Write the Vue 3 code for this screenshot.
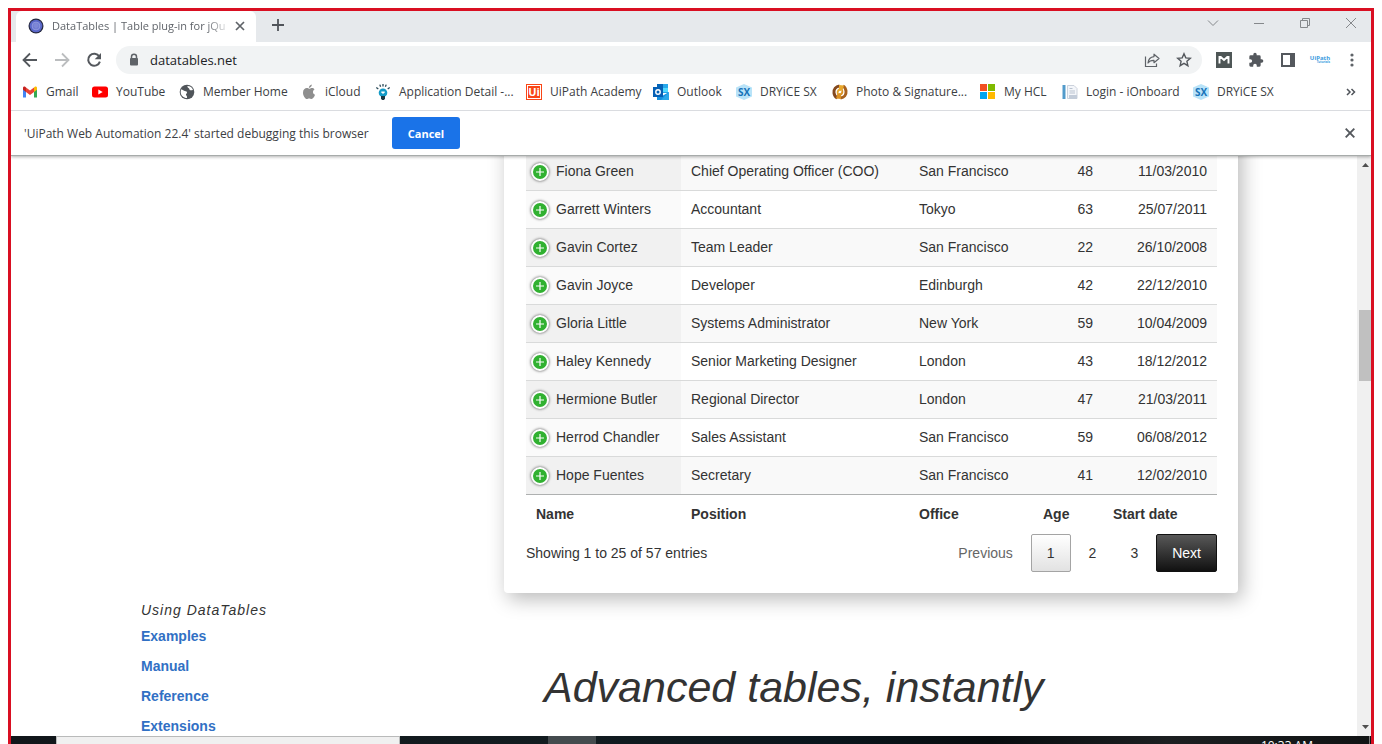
<script setup>
import { ref } from 'vue'

const address = ref('datatables.net')

const bookmarks = [
  { icon: 'gmail', label: 'Gmail' },
  { icon: 'youtube', label: 'YouTube' },
  { icon: 'globe', label: 'Member Home' },
  { icon: 'apple', label: 'iCloud' },
  { icon: 'bulb', label: 'Application Detail -...' },
  { icon: 'uipath', label: 'UiPath Academy' },
  { icon: 'outlook', label: 'Outlook' },
  { icon: 'sx', label: 'DRYiCE SX' },
  { icon: 'photo', label: 'Photo & Signature...' },
  { icon: 'windows', label: 'My HCL' },
  { icon: 'page', label: 'Login - iOnboard' },
  { icon: 'sx', label: 'DRYiCE SX' }
]

const rows = [
  ['Fiona Green', 'Chief Operating Officer (COO)', 'San Francisco', '48', '11/03/2010'],
  ['Garrett Winters', 'Accountant', 'Tokyo', '63', '25/07/2011'],
  ['Gavin Cortez', 'Team Leader', 'San Francisco', '22', '26/10/2008'],
  ['Gavin Joyce', 'Developer', 'Edinburgh', '42', '22/12/2010'],
  ['Gloria Little', 'Systems Administrator', 'New York', '59', '10/04/2009'],
  ['Haley Kennedy', 'Senior Marketing Designer', 'London', '43', '18/12/2012'],
  ['Hermione Butler', 'Regional Director', 'London', '47', '21/03/2011'],
  ['Herrod Chandler', 'Sales Assistant', 'San Francisco', '59', '06/08/2012'],
  ['Hope Fuentes', 'Secretary', 'San Francisco', '41', '12/02/2010']
]

const links = ['Examples', 'Manual', 'Reference', 'Extensions']
</script>

<template>
  <div class="screen">
    <header class="chrome">
      <div class="tabstrip">
        <div class="tab">
          <svg width="16" height="16" viewBox="0 0 16 16">
            <circle cx="8" cy="8" r="7.5" fill="#26293f" />
            <circle cx="8" cy="8" r="6.3" fill="#5966c8" />
            <circle cx="8" cy="8" r="3.9" fill="#6f7ad2" stroke="#8f98de" stroke-width="1" />
            <path d="M5.6 6 8 4.800l2.400 1.200v2.600L8 11 5.600 8.600z" fill="#7d87d6" />
          </svg>
          <span class="tab-title">DataTables | Table plug-in for jQu</span>
          <button class="bare" aria-label="Close tab">
            <svg width="10" height="10" viewBox="0 0 10 10"><path d="m1 1 8 8M9 1 1 9" stroke="#5f6368" stroke-width="1.7" fill="none" /></svg>
          </button>
        </div>
        <button class="bare new-tab" aria-label="New tab">
          <svg width="12" height="12" viewBox="0 0 12 12"><path d="M6 0v12M0 6h12" stroke="#50545a" stroke-width="1.8" /></svg>
        </button>
        <div class="window-controls">
          <button class="bare" aria-label="Search tabs">
            <svg width="12" height="12" viewBox="0 0 12 12"><path d="m1 3.5 5 5 5-5" stroke="#85888b" fill="none" /></svg>
          </button>
          <button class="bare" aria-label="Minimize">
            <svg width="12" height="12" viewBox="0 0 12 12"><path d="M1 6.500h10" stroke="#85888b" /></svg>
          </button>
          <button class="bare" aria-label="Restore">
            <svg width="12" height="12" viewBox="0 0 12 12"><path d="M1.500 3.500h7v7h-7zM3.500 3.500v-2h7v7h-2" stroke="#85888b" fill="none" /></svg>
          </button>
          <button class="bare" aria-label="Close window">
            <svg width="12" height="12" viewBox="0 0 12 12"><path d="m1 1 10 10M11 1 1 11" stroke="#85888b" fill="none" /></svg>
          </button>
        </div>
      </div>

      <div class="toolbar">
        <button class="bare tool" aria-label="Back">
          <svg width="16" height="16" viewBox="0 0 16 16"><path d="M15 8H2M8 1.500 1.500 8 8 14.500" stroke="#54585d" stroke-width="1.800" fill="none" /></svg>
        </button>
        <button class="bare tool" aria-label="Forward">
          <svg width="16" height="16" viewBox="0 0 16 16"><path d="M1 8h13M8 1.500 14.500 8 8 14.500" stroke="#bbbdbf" stroke-width="1.800" fill="none" /></svg>
        </button>
        <button class="bare tool" aria-label="Reload">
          <svg width="16" height="16" viewBox="0 0 16 16"><path d="M13.300 4.500A6 6 0 1 0 13.900 9.600" stroke="#54585d" stroke-width="2" fill="none" /><path d="M15 1v6.300H8.700z" fill="#54585d" /></svg>
        </button>
        <div class="omnibox">
          <svg width="12" height="14" viewBox="0 0 12 14"><path d="M3.500 6V3.700a2.500 2.500 0 0 1 5 0V6" stroke="#5f6368" stroke-width="1.500" fill="none" /><rect x="2" y="5" width="8" height="7.500" rx="1" fill="#5f6368" /></svg>
          <input v-model="address" class="address" type="text" aria-label="Address" />
          <button class="bare tool" aria-label="Share">
            <svg width="16" height="16" viewBox="0 0 16 16"><path d="M1.500 4.500v10h11v-3" stroke="#5f6368" stroke-width="1.200" fill="none" /><path d="M10 2.200 15 6.500 10 10.700V8.400C7 8.300 5.200 9.200 4 11c.3-3.600 2.300-6 6-6.400z" stroke="#5f6368" stroke-width="1.200" stroke-linejoin="round" fill="none" /></svg>
          </button>
          <button class="bare tool" aria-label="Bookmark">
            <svg width="16" height="16" viewBox="0 0 16 16"><path d="m8 1.800 1.800 4.100 4.500.4-3.400 3 1 4.400L8 11.400l-3.900 2.300 1-4.400-3.400-3 4.500-.4z" stroke="#54585d" stroke-width="1.400" fill="none" /></svg>
          </button>
        </div>
        <button class="bare tool" aria-label="Mail extension">
          <svg width="16" height="16" viewBox="0 0 16 16"><path d="M0 0h16v16H0z" fill="#4e5656" /><path d="M3.500 11.500V5h1.200L8 8l3.300-3h1.200v6.500" stroke="#fff" stroke-width="1.900" fill="none" /></svg>
        </button>
        <button class="bare tool" aria-label="Extensions">
          <svg width="16" height="16" viewBox="0 0 24 24"><path d="M20.500 11H19V7a2 2 0 0 0-2-2h-4V3.500a2.500 2.500 0 0 0-5 0V5H4a2 2 0 0 0-2 2v3.800h1.500a2.700 2.700 0 0 1 0 5.400H2V20a2 2 0 0 0 2 2h3.800v-1.500a2.700 2.700 0 0 1 5.400 0V22H17a2 2 0 0 0 2-2v-4h1.500a2.500 2.500 0 0 0 0-5z" fill="#54585d" /></svg>
        </button>
        <button class="bare tool" aria-label="Side panel">
          <svg width="16" height="16" viewBox="0 0 16 16"><path d="M1 1h14v14H1zM3 3v10h7V3z" fill="#54585d" fill-rule="evenodd" /></svg>
        </button>
        <button class="bare tool profile" aria-label="Profile"><span>UiPath</span><small>Tutorials</small></button>
        <button class="bare tool" aria-label="Menu">
          <svg width="16" height="16" viewBox="0 0 16 16" fill="#5f6368"><circle cx="8" cy="3" r="1.600" /><circle cx="8" cy="8" r="1.600" /><circle cx="8" cy="13" r="1.600" /></svg>
        </button>
      </div>

      <nav class="bookmarks" aria-label="Bookmarks">
        <a v-for="(b, i) in bookmarks" :key="i" href="#" class="bookmark">
          <svg v-if="b.icon === 'gmail'" width="16" height="16" viewBox="0 0 16 16"><path d="M1 4.500v9h3V7z" fill="#4285f4" /><path d="M15 4.500v9h-3V7z" fill="#34a853" /><path d="M12 3.600V8l3-2.300V4c0-1.400-1.300-1.900-2.200-1.200z" fill="#fbbc04" /><path d="M1 5.700 4 8V3.600l-.8-.8C2.300 2.100 1 2.600 1 4z" fill="#c5221f" /><path d="M4 3.500 8 6.500l4-3V8l-4 3-4-3z" fill="#ea4335" /></svg>
          <svg v-else-if="b.icon === 'youtube'" width="16" height="16" viewBox="0 0 16 16"><rect y="2.500" width="16" height="11" rx="2.500" fill="#f00" /><path d="M6.300 5.500v5l4.400-2.500z" fill="#fff" /></svg>
          <svg v-else-if="b.icon === 'globe'" width="16" height="16" viewBox="0 0 16 16"><circle cx="8" cy="8" r="7.300" fill="#50555a" /><path d="M2 5.500c1.500 0 2 .7 3 1.200s2.700.2 3 1.500-1.500 1.500-1 2.800c.4 1 1.300 1 1 2.900-3.500 0-6.300-2.500-6.300-6z" fill="#fff" /><path d="M8.500 2c-.3 1.300.3 1.600 1.300 2.300.8.600.4 1.700 1.500 2 1.200.3 2-.5 2.700-.3-.8-2.500-2.800-4-5.500-4z" fill="#fff" /></svg>
          <svg v-else-if="b.icon === 'apple'" width="16" height="16" viewBox="0 0 16 16" fill="#8e8e8e"><path d="M10.800.5c.1 1.700-1.200 3.300-2.900 3.400C7.700 2.300 9.200.7 10.800.5z" /><path d="M13.500 5.400c-2.200 1.400-1.900 4.300.5 5.300-.6 1.700-1.900 4.300-3.500 4.300-.9 0-1.200-.6-2.300-.6s-1.500.6-2.300.6C4.200 15 2 11.800 2 8.700c0-3 2-4.600 3.800-4.600 1.100 0 1.700.7 2.400.7s1.500-.8 2.800-.8c1 0 1.900.5 2.500 1.400z" /></svg>
          <svg v-else-if="b.icon === 'bulb'" width="16" height="16" viewBox="0 0 16 16"><circle cx="8" cy="8.700" r="4.300" fill="#149bc7" /><path d="M6 12h4v2.500L9 16H7l-1-1.500z" fill="#1c3642" /><path d="M5.800 8c1-.6 3.400-.6 4.400 0L8 10z" fill="#fff" /><path d="M8 0v2.500M4.800.6l.8 2.200M11.200.6l-.8 2.200M1.300 3.500l2 1.500M14.700 3.500l-2 1.500" stroke="#294857" stroke-width="1.300" /></svg>
          <span v-else-if="b.icon === 'uipath'" class="ui-logo">Ui</span>
          <svg v-else-if="b.icon === 'outlook'" width="16" height="16" viewBox="0 0 16 16"><path d="M4 0h11v9H4z" fill="#28a8ea" /><path d="M4 0h6v5H4z" fill="#0364b8" /><path d="M10 4h5v4h-5z" fill="#50d9ff" /><path d="m4 8 6 3.500L16 8v8H4z" fill="#1490df" /><path d="m16 8-8 8h8z" fill="#28a8ea" /><path d="M0 3h10v10H0z" fill="#0560b5" /><circle cx="5" cy="8" r="2.200" stroke="#fff" stroke-width="1.400" fill="none" /></svg>
          <span v-else-if="b.icon === 'sx'" class="sx-logo">SX</span>
          <svg v-else-if="b.icon === 'photo'" width="16" height="16" viewBox="0 0 16 16"><path d="M7.500 2C4 2.500 1.500 5 2 9c.3 2.400 1.300 4 3.500 5" stroke="#84491f" stroke-width="3" fill="none" /><path d="M8.500 14c3.500-.5 6-3 5.500-7-.3-2.400-1.300-4-3-5" stroke="#a8611f" stroke-width="3" fill="none" /><path d="M12 1.500 7 1v3.500C4.500 6 4 8.500 5.500 11 6.500 7.500 8 7 10.500 6.500z" fill="#e8a72c" /><path d="M4 14.500l5 .5v-3.500c2.500-1.500 3-4 1.500-6.500C9.500 8.500 8 9 5.500 9.500z" fill="#dc9222" /><path d="M8 6.500 9.500 8 8 9.500 6.500 8z" fill="#fff" /></svg>
          <svg v-else-if="b.icon === 'windows'" width="16" height="16" viewBox="0 0 16 16"><path d="M0 0h7v7H0z" fill="#f25022" /><path d="M8 0h7v7H8z" fill="#7fba00" /><path d="M0 8h7v7H0z" fill="#00a4ef" /><path d="M8 8h7v7H8z" fill="#ffb900" /></svg>
          <svg v-else width="16" height="16" viewBox="0 0 16 16"><path d="M.5 1h3v14h-3z" fill="#529bcb" /><path d="M5.500 1.500H12l3 3v10H5.500z" fill="#f4f6fa" stroke="#ccd2dc" /><path d="M7.500 4.500h3M7.500 7h5.500M7.500 9h5.500" stroke="#b9c2cf" /><path d="M7 11h8v4H7z" fill="#c3ccd9" /></svg>
          <span class="bookmark-label">{{ b.label }}</span>
        </a>
        <button class="bare" aria-label="More bookmarks">
          <svg width="10" height="8" viewBox="0 0 10 8"><path d="m1 1 3 3-3 3M5.500 1l3 3-3 3" stroke="#50545a" stroke-width="1.500" fill="none" /></svg>
        </button>
      </nav>

      <div class="infobar">
        <span class="notice">'UiPath Web Automation 22.4' started debugging this browser</span>
        <button class="cancel">Cancel</button>
        <button class="bare dismiss" aria-label="Dismiss">
          <svg width="10" height="10" viewBox="0 0 10 10"><path d="m.7.7 8.600 8.600M9.300.7.7 9.300" stroke="#54585d" stroke-width="1.900" /></svg>
        </button>
      </div>
    </header>

    <div class="viewport">
      <main class="page">
        <section class="card">
          <table>
            <colgroup>
              <col class="c-name" /><col class="c-position" /><col class="c-office" /><col class="c-age" /><col />
            </colgroup>
            <tbody>
              <tr v-for="r in rows" :key="r[0]">
                <td class="name">
                  <div class="name-cell"><button class="expand" :aria-label="'Details of ' + r[0]"><svg width="8" height="8" viewBox="0 0 8 8"><path d="M4 0v8M0 4h8" stroke="#fff" stroke-width="1.200" /></svg></button>{{ r[0] }}</div>
                </td>
                <td>{{ r[1] }}</td>
                <td>{{ r[2] }}</td>
                <td class="num">{{ r[3] }}</td>
                <td class="num">{{ r[4] }}</td>
              </tr>
            </tbody>
            <tfoot>
              <tr>
                <th>Name</th>
                <th>Position</th>
                <th>Office</th>
                <th>Age</th>
                <th>Start date</th>
              </tr>
            </tfoot>
          </table>
          <div class="table-foot">
            <span>Showing 1 to 25 of 57 entries</span>
            <div class="pager">
              <button class="pg disabled" disabled>Previous</button>
              <button class="pg current">1</button>
              <button class="pg">2</button>
              <button class="pg">3</button>
              <button class="pg next">Next</button>
            </div>
          </div>
        </section>

        <div class="lower">
          <aside>
            <h2>Using DataTables</h2>
            <ul>
              <li v-for="l in links" :key="l"><a href="#">{{ l }}</a></li>
            </ul>
          </aside>
          <h1>Advanced tables, instantly</h1>
        </div>
      </main>
      <div class="scrollbar">
        <svg width="7" height="4" viewBox="0 0 7 4"><path d="M0 4h7L3.500 0z" fill="#505050" /></svg>
        <div class="thumb"></div>
        <svg width="7" height="4" viewBox="0 0 7 4"><path d="M0 0h7L3.500 4z" fill="#505050" /></svg>
      </div>
    </div>

    <footer class="taskbar">
      <div class="task-search"></div>
      <div class="task-active"></div>
      <span class="clock">10:33 AM</span>
      <div class="peek"></div>
    </footer>
  </div>
</template>

<style>
body {
  margin: 0;
  background: #fff;
}
</style>

<style scoped>
* {
  box-sizing: border-box;
}
.screen {
  height: calc(100vh - 8px);
  margin: 8px 8px 0;
  border: 3px solid #d90f22;
  border-bottom: 0;
  display: flex;
  flex-direction: column;
  overflow: hidden;
  background: #fff;
  font-family: "Open Sans", "Noto Sans", sans-serif;
  font-size: 12px;
  color: #3c4043;
}
svg {
  display: block;
  flex: none;
}
.bare {
  border: 0;
  padding: 0;
  background: none;
  font: inherit;
  color: inherit;
  display: flex;
  align-items: center;
  justify-content: center;
  flex: none;
}
.chrome {
  position: relative;
  z-index: 2;
  flex: none;
  background: #fff;
  border-bottom: 1px solid #a7abaa;
  box-shadow: 0 1px 3px rgba(0, 0, 0, 0.3);
}
.tabstrip {
  display: flex;
  height: 31px;
  padding-left: 5px;
  background: #e6e9ec;
}
.tab {
  display: flex;
  align-items: center;
  width: 240px;
  padding: 0 11px 2px 12px;
  border-radius: 6px 6px 0 0;
  background: #fff;
}
.tab-title {
  flex: 1;
  min-width: 0;
  margin: 0 4px 0 8px;
  white-space: nowrap;
  font-size: 11px;
  color: #60646a;
  mask-image: linear-gradient(to right, #000 86%, transparent);
}
.new-tab {
  width: 44px;
  padding-bottom: 3px;
}
.window-controls {
  display: flex;
  height: 23px;
  margin: 0 -3px 0 auto;
}
.window-controls button {
  width: 46px;
}
.toolbar {
  display: flex;
  align-items: center;
  height: 36px;
  padding: 0 3px;
}
.tool {
  width: 32px;
  height: 28px;
}
.omnibox {
  display: flex;
  align-items: center;
  flex: 1;
  height: 28px;
  margin: 0 6px;
  padding: 0 2px 0 12px;
  border-radius: 14px;
  background: #f1f3f4;
}
.address {
  flex: 1;
  min-width: 0;
  margin-left: 10px;
  padding: 0;
  border: 0;
  outline: 0;
  background: none;
  font: 13px "Open Sans", "Noto Sans", sans-serif;
  color: #202124;
}
.profile {
  flex-direction: column;
  font-size: 6px;
  font-weight: 700;
  line-height: 5px;
  color: #3c9be0;
}
.profile small {
  align-self: flex-end;
  margin-right: 6px;
  font-size: 3px;
  line-height: 3px;
}
.bookmarks {
  display: grid;
  grid-template-columns: 70px 87px 122px 74px 151px 127px 83px 96px 148px 82px 131px 1fr auto;
  align-items: center;
  height: 33px;
  padding: 0 15px 4px 11px;
  border-bottom: 1px solid #dadce0;
}
.bookmark {
  display: flex;
  align-items: center;
  gap: 8px;
  color: #3c4043;
  text-decoration: none;
  white-space: nowrap;
}
.bookmark-label {
  padding-bottom: 2px;
}
.ui-logo {
  width: 16px;
  height: 16px;
  border: 1px solid #fa4616;
  outline: 1px solid #fff;
  outline-offset: -2px;
  background: #fa4616;
  color: #fff;
  font-size: 11px;
  font-weight: 700;
  line-height: 14px;
  text-align: center;
}
.sx-logo {
  width: 16px;
  height: 16px;
  background: #b9e3f8;
  clip-path: polygon(50% 0, 100% 22%, 100% 78%, 50% 100%, 0 78%, 0 22%);
  color: #1672b8;
  font-size: 10px;
  font-weight: 700;
  line-height: 16px;
  text-align: center;
}
.infobar {
  display: flex;
  align-items: center;
  gap: 12px;
  height: 44px;
  padding: 0 16px 0 13px;
}
.notice {
  min-width: 356px;
}
.cancel {
  width: 68px;
  height: 32px;
  border: 0;
  border-radius: 3px;
  background: #1a73e8;
  color: #fff;
  font: 700 11px "Open Sans", "Noto Sans", sans-serif;
}
.dismiss {
  margin-left: auto;
}
.viewport {
  display: flex;
  flex: 1;
  min-height: 0;
  overflow: hidden;
}
.page {
  flex: 1;
  min-width: 0;
  padding: 0 119px 0 130px;
  font-family: "Liberation Sans", Arial, sans-serif;
  font-size: 14px;
  line-height: 21px;
  color: #333;
}
.card {
  margin: -33px 0 0 363px;
  padding: 30px 21px 21px 22px;
  border-radius: 4px;
  background: #fff;
  box-shadow: 4px 6px 20px rgba(0, 0, 0, 0.28);
}
table {
  width: 100%;
  table-layout: fixed;
  border-collapse: separate;
  border-spacing: 0;
}
.c-name {
  width: 155px;
}
.c-position {
  width: 228px;
}
.c-office {
  width: 124px;
}
.c-age {
  width: 70px;
}
td {
  height: 38px;
  padding: 0 10px;
  border-bottom: 1px solid #d9dada;
  white-space: nowrap;
}
tbody tr:nth-child(odd) {
  background: #f9f9f9;
}
.name {
  padding: 0 5px;
  background: #fafafa;
}
tbody tr:nth-child(odd) .name {
  background: #f1f1f1;
}
tbody tr:last-child td {
  border-bottom-color: #aeb0b0;
}
.name-cell {
  display: flex;
  align-items: center;
  gap: 7px;
}
.expand {
  display: flex;
  align-items: center;
  justify-content: center;
  width: 18px;
  height: 18px;
  padding: 0;
  border: 2px solid #fff;
  border-radius: 50%;
  background: #31b131;
  box-shadow: 0 0 3px #444;
}
.num {
  text-align: right;
}
th {
  padding: 9px 10px 6px;
  text-align: left;
  white-space: nowrap;
}
.table-foot {
  display: flex;
  align-items: center;
  justify-content: space-between;
  padding-top: 3px;
}
.pager {
  display: flex;
  gap: 2px;
}
.pg {
  min-width: 39px;
  height: 38px;
  padding: 0 15px;
  border: 1px solid transparent;
  border-radius: 2px;
  background: none;
  font: 14px "Liberation Sans", Arial, sans-serif;
  color: #333;
}
.pg.disabled {
  color: #666;
}
.pg.current {
  border-color: #a4a4a4;
  background: linear-gradient(#fff, #e2e2e2);
}
.pg.next {
  border-color: #111;
  background: linear-gradient(#585858, #111);
  color: #fff;
}
.lower {
  display: grid;
  grid-template-columns: 403px 1fr;
}
h2 {
  margin: 7px 0 5px;
  font-size: 14px;
  font-weight: 400;
  font-style: italic;
  letter-spacing: 1px;
  line-height: 21px;
}
ul {
  margin: 0;
  padding: 0;
  list-style: none;
}
li {
  height: 30px;
}
li a {
  color: #3170c4;
  font-weight: 700;
  text-decoration: none;
}
h1 {
  margin: 70px 0 0;
  font-size: 43px;
  font-weight: 400;
  font-style: italic;
  line-height: 48px;
  white-space: nowrap;
}
.scrollbar {
  display: flex;
  flex-direction: column;
  align-items: flex-end;
  flex: none;
  width: 14px;
  padding: 7px 0;
  background: #f0f0f0;
}
.scrollbar svg {
  margin-right: 2px;
}
.thumb {
  width: 12px;
  height: 71px;
  margin: 143px 0 auto;
  background: #c0c0c0;
}
.taskbar {
  display: flex;
  flex: none;
  height: 8px;
  padding-left: 45px;
  overflow: hidden;
  background: linear-gradient(to right, #11161a, #121c20 40%, #0a151c 60%, #080c0f 72%, #1c1f21 85%, #101314);
}
.task-search {
  width: 344px;
  border: 1px solid #b9baba;
  border-bottom: 0;
  background: #f0f0f0;
}
.task-active {
  width: 48px;
  margin-left: 148px;
  background: #444b4e;
}
.clock {
  margin: 2px 56px 0 auto;
  font-size: 12px;
  line-height: 16px;
  color: #fff;
}
.peek {
  width: 2px;
  border-left: 1px solid #777;
}
</style>
